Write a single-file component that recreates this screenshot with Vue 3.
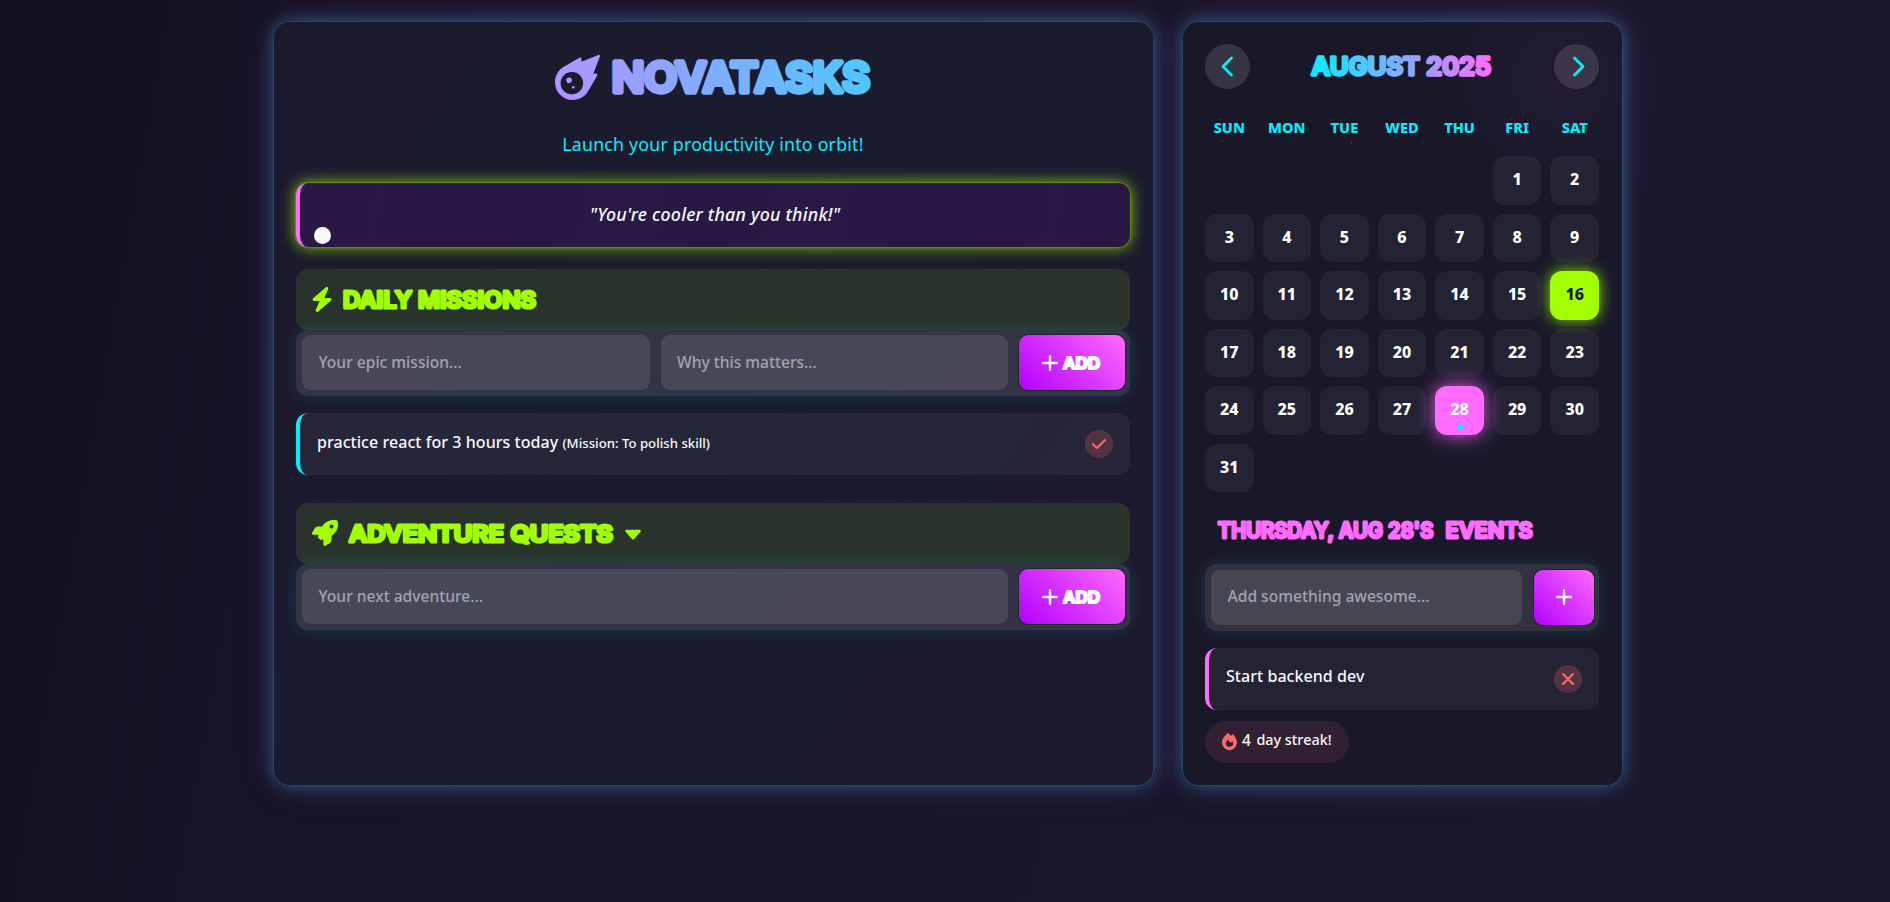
<script setup>
const weekdays = ['SUN', 'MON', 'TUE', 'WED', 'THU', 'FRI', 'SAT']
const leading = 5
const days = Array.from({ length: 31 }, (_, i) => i + 1)
const today = 16
const selected = 28
</script>

<template>
  <div class="page">
    <main class="card board">
      <svg class="logo" width="834" height="60" viewBox="0 0 834 60">
        <defs>
          <linearGradient id="brand" gradientUnits="userSpaceOnUse" x1="20" y1="80" x2="814" y2="-20">
            <stop offset="0" stop-color="#ff6bff" />
            <stop offset="1" stop-color="#00f0ff" />
          </linearGradient>
        </defs>
        <svg x="259" y="10" width="45" height="45" viewBox="0 0 512 512">
          <defs>
            <linearGradient id="comet" x1="0" y1="1" x2="1" y2="0">
              <stop offset="0" stop-color="#b491ff" />
              <stop offset="1" stop-color="#9f9fff" />
            </linearGradient>
          </defs>
          <path fill="url(#comet)" d="M493.7 .9L299.4 75.6l2.3-29.3c1-12.8-12.8-21.5-24-15.1L101.3 133.4C38.6 169.7 0 236.6 0 309C0 421.1 90.9 512 203 512c72.4 0 139.4-38.6 175.7-101.3L480.8 234.3c6.5-11.1-2.2-25-15.1-24l-29.3 2.3L511.1 18.3c.6-1.5 .9-3.2 .9-4.8C512 6 506 0 498.5 0c-1.7 0-3.3 .3-4.8 .9zM192 192a128 128 0 1 1 0 256 128 128 0 1 1 0-256zm0 96a32 32 0 1 0 -64 0 32 32 0 1 0 64 0zm16 96a16 16 0 1 0 0-32 16 16 0 1 0 0 32z" />
        </svg>
        <text class="display big" x="316" y="47" font-size="41" textLength="258" lengthAdjust="spacingAndGlyphs" fill="url(#brand)" stroke="url(#brand)" stroke-width="5.4">NOVATASKS</text>
      </svg>
      <p class="tagline">Launch your productivity into orbit!</p>

      <div class="quote">
        <span>"You're cooler than you think!"</span>
        <i class="orb"></i>
      </div>

      <section class="block">
        <header class="bar">
          <svg width="22" height="25" viewBox="0 0 448 512"><path fill="#a2ff00" d="M349.4 44.6c5.9-13.7 1.5-29.7-10.6-38.5s-28.6-8-39.9 1.8l-256 224c-10 8.8-13.6 22.9-8.9 35.3S50.7 288 64 288H175.5L98.6 467.4c-5.9 13.7-1.5 29.7 10.6 38.5s28.6 8 39.9-1.8l256-224c10-8.8 13.6-22.9 8.9-35.3s-16.6-20.7-30-20.7H272.5L349.4 44.6z" /></svg>
          <svg class="bar-title" width="200" height="30" viewBox="0 0 200 30">
            <text class="display lime" x="1" y="23.6" font-size="23" textLength="193" lengthAdjust="spacingAndGlyphs" stroke-width="3.2">DAILY MISSIONS</text>
          </svg>
        </header>
        <form class="entry" @submit.prevent>
          <input type="text" placeholder="Your epic mission..." />
          <input type="text" placeholder="Why this matters..." />
          <button class="add" type="button">
            <svg width="16" height="16" viewBox="0 0 16 16"><path d="M8 1.2V14.8M1.2 8H14.8" stroke="#fff" stroke-width="2.4" stroke-linecap="round" /></svg>
            <svg width="40" height="28" viewBox="0 0 40 28"><text class="display white" x="1" y="20.2" font-size="16.5" textLength="37" lengthAdjust="spacingAndGlyphs" stroke-width="2.2">ADD</text></svg>
          </button>
        </form>
        <div class="item cyan">
          <span>practice react for 3 hours today <small>(Mission: To polish skill)</small></span>
          <button class="round" type="button">
            <svg width="16" height="14" viewBox="0 0 16 14"><path d="M2 7.2L5.9 11L14 3" fill="none" stroke="#ff6b6b" stroke-width="2" stroke-linecap="round" stroke-linejoin="round" /></svg>
          </button>
        </div>
      </section>

      <section class="block second">
        <header class="bar">
          <svg width="26" height="26" viewBox="0 0 512 512"><path fill="#a2ff00" d="M156.6 384.9L125.7 354c-8.5-8.5-11.5-20.8-7.7-32.2c3-8.9 7-20.5 11.8-33.8L24 288c-8.6 0-16.6-4.6-20.9-12.1s-4.2-16.7 .2-24.1l52.5-88.5c13-21.9 36.5-35.3 61.9-35.3l82.3 0c2.4-4 4.8-7.7 7.2-11.3C289.1-4.1 411.1-8.1 483.9 5.3c11.6 2.1 20.6 11.2 22.8 22.8c13.4 72.9 9.3 194.8-111.4 276.7c-3.5 2.4-7.3 4.8-11.3 7.2v82.3c0 25.4-13.4 49-35.3 61.9l-88.5 52.5c-7.4 4.4-16.6 4.5-24.1 .2s-12.1-12.2-12.1-20.9V380.8c-14.1 4.9-26.4 8.9-35.7 11.9c-11.2 3.6-23.4 .5-31.8-7.8zM384 168a40 40 0 1 0 0-80 40 40 0 1 0 0 80z" /></svg>
          <svg class="bar-title quests" width="268" height="30" viewBox="0 0 268 30">
            <text class="display lime" x="1" y="23.6" font-size="23" textLength="264" lengthAdjust="spacingAndGlyphs" stroke-width="3.2">ADVENTURE QUESTS</text>
          </svg>
          <svg class="caret" width="18" height="12" viewBox="0 0 18 12"><path d="M2.4 2H15.6L9 9.4Z" fill="#a2ff00" stroke="#a2ff00" stroke-width="2.4" stroke-linejoin="round" /></svg>
        </header>
        <form class="entry" @submit.prevent>
          <input type="text" placeholder="Your next adventure..." />
          <button class="add" type="button">
            <svg width="16" height="16" viewBox="0 0 16 16"><path d="M8 1.2V14.8M1.2 8H14.8" stroke="#fff" stroke-width="2.4" stroke-linecap="round" /></svg>
            <svg width="40" height="28" viewBox="0 0 40 28"><text class="display white" x="1" y="20.2" font-size="16.5" textLength="37" lengthAdjust="spacingAndGlyphs" stroke-width="2.2">ADD</text></svg>
          </button>
        </form>
      </section>
    </main>

    <aside class="card side">
      <header class="month">
        <button class="nav" type="button"><svg width="20" height="24" viewBox="0 0 20 24"><path d="M13.5 3L5 11.5L13.5 20" /></svg></button>
        <svg width="186" height="30" viewBox="0 0 186 30">
          <defs>
            <linearGradient id="month" gradientUnits="userSpaceOnUse" x1="0" y1="30" x2="180" y2="0">
              <stop offset="0" stop-color="#00f0ff" />
              <stop offset="1" stop-color="#ff6bff" />
            </linearGradient>
          </defs>
          <text class="display" x="2.6" y="23" font-size="24.5" textLength="179.5" lengthAdjust="spacingAndGlyphs" fill="url(#month)" stroke="url(#month)" stroke-width="3.3">AUGUST 2025</text>
        </svg>
        <button class="nav" type="button"><svg width="20" height="24" viewBox="0 0 20 24"><path d="M7.5 3L16 11.5L7.5 20" /></svg></button>
      </header>

      <div class="grid names"><span v-for="w in weekdays" :key="w">{{ w }}</span></div>
      <div class="grid">
        <span v-for="n in leading" :key="'e' + n"></span>
        <div v-for="d in days" :key="d" class="day" :class="{ today: d === today, selected: d === selected }">
          {{ d }}<i v-if="d === selected" class="dot"></i>
        </div>
      </div>

      <svg class="events-title" width="330" height="30" viewBox="0 0 330 30">
        <text class="display pink" x="0.8" y="21.4" font-size="20.8" textLength="215.5" lengthAdjust="spacingAndGlyphs" stroke-width="2.8">THURSDAY, AUG 28'S</text>
        <text class="display pink" x="228.6" y="21.4" font-size="20.8" textLength="87" lengthAdjust="spacingAndGlyphs" stroke-width="2.8">EVENTS</text>
      </svg>
      <form class="entry" @submit.prevent>
        <input type="text" placeholder="Add something awesome..." />
        <button class="add small" type="button">
          <svg width="16" height="16" viewBox="0 0 16 16"><path d="M8 1.2V14.8M1.2 8H14.8" stroke="#fff" stroke-width="2.4" stroke-linecap="round" /></svg>
        </button>
      </form>
      <div class="item rose">
        <span>Start backend dev</span>
        <button class="round" type="button">
          <svg width="14" height="14" viewBox="0 0 14 14"><path d="M2 2L12 12M12 2L2 12" fill="none" stroke="#ff6b6b" stroke-width="2.1" stroke-linecap="round" /></svg>
        </button>
      </div>
      <div class="streak">
        <svg width="15" height="17" viewBox="0 0 448 512"><path fill="#ff6b6b" d="M159.3 5.4c7.8-7.3 19.9-7.2 27.7 .1c27.6 25.9 53.5 53.8 77.7 84c11-14.4 23.5-30.1 37-42.9c7.9-7.4 20.1-7.4 28 .1c34.6 33 63.9 76.6 84.5 118c20.3 40.8 33.8 82.5 33.8 111.9C448 404.2 348.2 512 224 512C98.4 512 0 404.1 0 276.5c0-38.4 17.8-85.3 45.4-131.7C73.3 97.7 112.7 48.6 159.3 5.4zM225.7 416c25.3 0 47.7-7 68.8-21c42.1-29.4 53.4-88.2 28.1-134.4c-4.5-9-16-9.6-22.5-2l-25.2 29.3c-6.6 7.6-18.5 7.4-24.7-.5c-16.5-21-46-58.5-62.8-79.8c-6.3-8-18.3-8.1-24.7-.1c-33.8 42.5-50.8 69.3-50.8 99.4C112 375.4 162.6 416 225.7 416z" /></svg>
        <b>4</b><span>day streak!</span>
      </div>
    </aside>
  </div>
</template>

<style>
html, body { margin: 0; background: #171528; }
</style>

<style scoped>
* { box-sizing: border-box; }
.page {
  height: 902px;
  overflow: hidden;
  padding: 22px 0 0 274px;
  display: flex;
  align-items: flex-start;
  gap: 30px;
  color: #f8f8ff;
  font: 500 16px/1.6 "Noto Sans", sans-serif;
  background:
    radial-gradient(circle at 1560px 80px, rgba(255, 107, 255, .03), transparent 160px),
    linear-gradient(100deg, #11101e 0%, #161427 18%, #181629 60%, #19182a 100%);
}
.card {
  height: 763px;
  border-radius: 16px;
  padding: 22px 23px 22px 22px;
  display: flex;
  flex-direction: column;
  box-shadow: 0 0 0 1px rgba(0, 200, 215, .1), 0 0 17px rgba(50, 150, 200, .58), 0 0 40px rgba(190, 90, 255, .16);
}
.board {
  width: 879px;
  background: linear-gradient(125deg, #1c192d 0%, #1a1b2e 30%, #191c2f 50%, #1b1a2e 75%, #1e192e 100%);
}
.side {
  width: 439px;
  background: radial-gradient(circle at 378px 56px, #231b33, #191829 110px);
}
.display {
  font-family: Inter, sans-serif;
  font-weight: 600;
  stroke-linejoin: round;
  stroke-linecap: round;
}
.lime { fill: #a2ff00; stroke: #a2ff00; }
.white { fill: #fff; stroke: #fff; }
.pink { fill: #ff6bff; stroke: #ff6bff; }
.logo { display: block; margin-top: 1px; flex: none; }
.tagline {
  margin: 24px 0 0;
  height: 30px;
  line-height: 30px;
  text-align: center;
  font-size: 17.7px;
  font-weight: 400;
  letter-spacing: .24px;
  color: #00f0ff;
}
.quote {
  position: relative;
  height: 64px;
  margin-top: 24px;
  border-left: 4px solid #ff6bff;
  border-radius: 12px;
  background: linear-gradient(100deg, #2b1744, #281944 50%, #2b1744);
  box-shadow: 0 0 0 1px rgba(100, 150, 10, .7), 0 0 15px rgba(150, 235, 0, .9);
  text-align: center;
  line-height: 62px;
  font-size: 17.8px;
  font-style: italic;
  letter-spacing: .22px;
}
.orb {
  position: absolute;
  left: 14px;
  top: 44px;
  width: 17px;
  height: 17px;
  border-radius: 50%;
  background: #f8f8fa;
}
.block { margin-top: 22px; }
.second { margin-top: 28px; }
.bar {
  height: 60.5px;
  border-radius: 12px;
  background: #29332c;
  padding: 0 15px;
  display: flex;
  align-items: center;
}
.bar svg { flex: none; display: block; }
.bar-title { margin-left: 9px; }
.second .bar svg:first-child { margin-left: 1px; }
.second .bar-title { margin-left: 10px; }
.bar .caret { margin-left: 8px; margin-top: 3px; }
.entry {
  height: 66.5px;
  border-radius: 12px;
  padding: 5.5px 5px 6px 6px;
  background: rgba(255, 255, 255, .11);
  box-shadow: 0 0 15px rgba(0, 240, 255, .14);
  display: flex;
  gap: 11px;
}
.entry input {
  flex: 1;
  min-width: 0;
  height: 55px;
  padding: 0 16px 2px 16.5px;
  border: 0;
  border-radius: 9px;
  background: rgba(255, 255, 255, .1);
  color: #f8f8ff;
  font: 500 15.6px "Noto Sans", sans-serif;
}
.entry input::placeholder { color: #a2a3af; opacity: 1; }
.add {
  width: 106px;
  height: 55px;
  border: 0;
  padding: 0;
  border-radius: 9px;
  background: linear-gradient(45deg, #b300ff, #ff6bff);
  box-shadow: 0 0 0 1px rgba(12, 40, 14, .7);
  display: flex;
  align-items: center;
  justify-content: center;
  gap: 4px;
}
.add.small { width: 60px; margin-left: 1px; }
.item {
  height: 62px;
  margin-top: 17px;
  border-left: 4px solid;
  border-radius: 12px;
  background: rgba(255, 255, 255, .05);
  padding: 0 17px 0 17px;
  display: flex;
  align-items: center;
  justify-content: space-between;
  letter-spacing: .05px;
}
.item span { color: #f8f8ff; margin-top: -3px; }
.item small { font-size: 13.2px; letter-spacing: 0; }
.cyan { border-color: #00f0ff; }
.rose { border-color: #ff6bff; }
.round {
  width: 28px;
  height: 28px;
  border: 0;
  padding: 0;
  border-radius: 50%;
  background: #533342;
  display: flex;
  align-items: center;
  justify-content: center;
}
.month { display: flex; align-items: center; justify-content: space-between; height: 45px; }
.nav {
  width: 45px;
  height: 45px;
  border: 0;
  padding: 0;
  border-radius: 50%;
  background: rgba(255, 255, 255, .12);
  display: flex;
  align-items: center;
  justify-content: center;
}
.nav path { fill: none; stroke: #00f0ff; stroke-width: 2.8; stroke-linecap: round; stroke-linejoin: round; }
.grid {
  display: grid;
  grid-template-columns: repeat(7, 1fr);
  grid-auto-rows: 48.5px;
  gap: 9px;
}
.names {
  height: 28px;
  margin: 24px 0 15px;
  grid-auto-rows: 28px;
  line-height: 28px;
  text-align: center;
  font-size: 14.6px;
  font-weight: 800;
  color: #00f0ff;
}
.day {
  position: relative;
  border-radius: 12px;
  background: rgba(255, 255, 255, .05);
  text-align: center;
  line-height: 46px;
  font-size: 16px;
  font-weight: 800;
  color: #fff;
}
.today { background: #a2ff00; color: #1a1a2e; box-shadow: 0 0 15px rgba(162, 255, 0, .85); }
.selected { background: #ff6bff; box-shadow: 0 0 20px rgba(255, 107, 255, .85); }
.dot {
  position: absolute;
  left: 22px;
  bottom: 5px;
  width: 6px;
  height: 6px;
  border-radius: 50%;
  background: #00f0ff;
}
.events-title { display: block; flex: none; margin: 24.5px 0 17.5px 11.5px; }
.side .entry { flex: none; }
.side .item { flex: none; }
.streak {
  width: 144px;
  height: 43px;
  margin-top: 11px;
  border-radius: 22px;
  background: #312032;
  padding-left: 17px;
  display: flex;
  align-items: center;
  font-size: 14.4px;
  line-height: 40px;
}
.streak b { font-weight: 500; font-size: 15.5px; margin: -3px 5.5px 0 5px; }
.streak span { margin-top: -3px; }
</style>
